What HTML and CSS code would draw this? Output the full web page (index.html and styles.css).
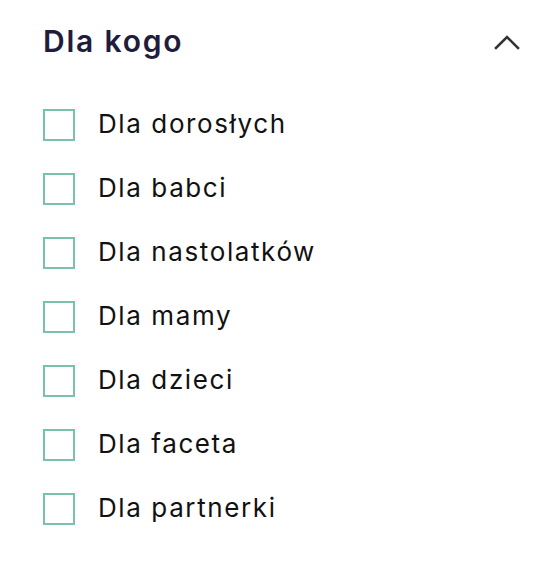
FILE: index.html
```html
<!DOCTYPE html>
<html lang="pl">
<head>
<meta charset="utf-8">
<link rel="stylesheet" href="styles.css">
</head>
<body>
<section class="filter">
  <div class="filter-head">
    <h2 class="filter-title">Dla kogo</h2>
    <svg class="chevron" width="26" height="16" viewBox="0 0 26 16"><polyline points="2,14 13,3 24,14" fill="none" stroke="#333" stroke-width="2.6" stroke-linecap="square"/></svg>
  </div>
  <ul class="options">
    <li class="option"><span class="box"></span><span class="label">Dla dorosłych</span></li>
    <li class="option"><span class="box"></span><span class="label">Dla babci</span></li>
    <li class="option"><span class="box"></span><span class="label">Dla nastolatków</span></li>
    <li class="option"><span class="box"></span><span class="label">Dla mamy</span></li>
    <li class="option"><span class="box"></span><span class="label">Dla dzieci</span></li>
    <li class="option"><span class="box"></span><span class="label">Dla faceta</span></li>
    <li class="option"><span class="box"></span><span class="label">Dla partnerki</span></li>
  </ul>
</section>
</body>
</html>
```
FILE: styles.css
```css
html, body {
  margin: 0;
  padding: 0;
  background: #fff;
}
body {
  font-family: "Inter", "Noto Sans", sans-serif;
}
.filter {
  padding: 0 28px 0 43px;
}
.filter-head {
  height: 82px;
  display: flex;
  align-items: center;
  justify-content: space-between;
}
.filter-title {
  margin: 0;
  font-size: 30px;
  font-weight: 600;
  color: #1f1d3b;
  letter-spacing: 1.8px;
  line-height: 1;
}
.chevron {
  display: block;
  margin-top: 2px;
}
.options {
  list-style: none;
  margin: 11px 0 0;
  padding: 0;
}
.option {
  height: 64px;
  display: flex;
  align-items: center;
  gap: 23px;
}
.box {
  width: 28px;
  height: 28px;
  border: 2px solid #78c2aa;
  flex: none;
}
.label {
  font-size: 26px;
  line-height: 1;
  color: #111;
  font-weight: 400;
  letter-spacing: 1.6px;
  margin-top: -3px;
}
```
